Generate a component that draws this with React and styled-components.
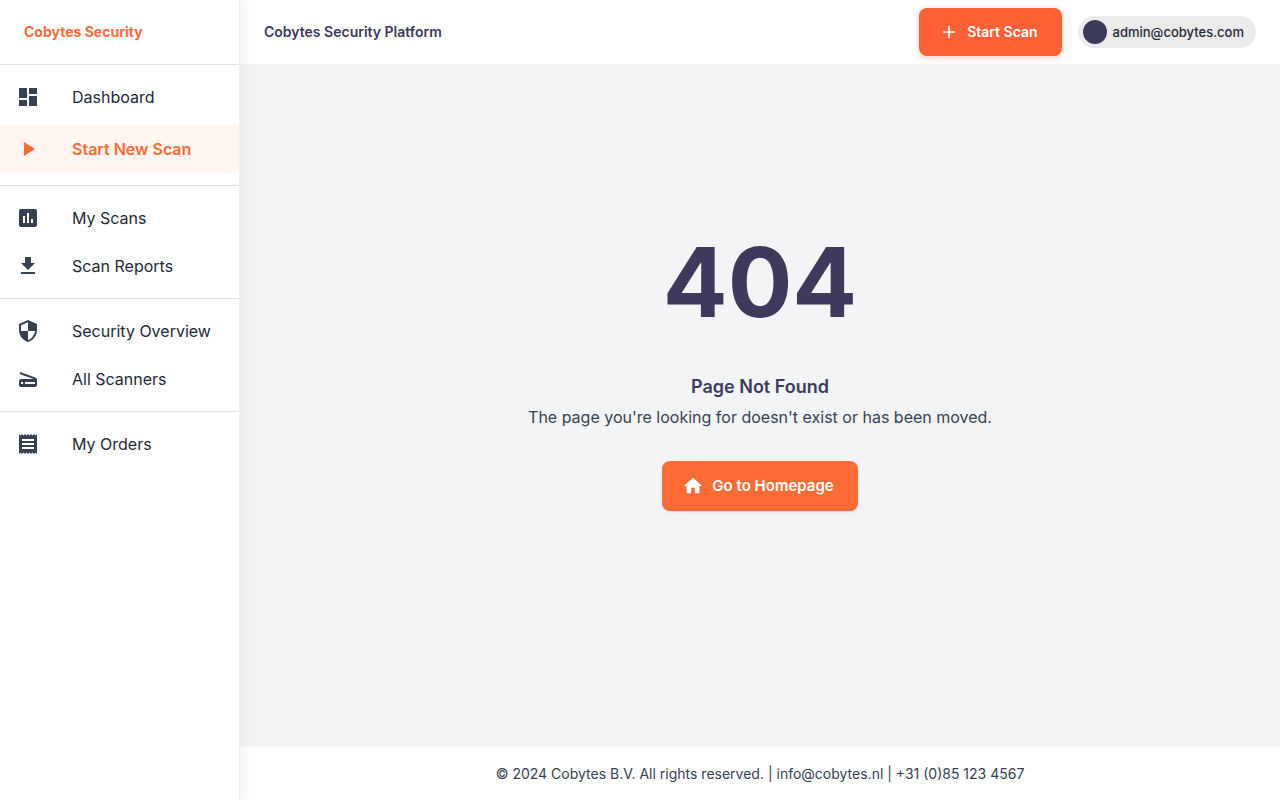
import React from "react";
import styled, { createGlobalStyle, css } from "styled-components";
import {
  MdAdd,
  MdAssessment,
  MdDashboard,
  MdFileDownload,
  MdHome,
  MdPlayArrow,
  MdReceipt,
  MdScanner,
  MdSecurity,
} from "react-icons/md";

const GlobalStyle = createGlobalStyle`
  *, *::before, *::after { box-sizing: border-box; }
  body {
    margin: 0;
    background: #f3f4f6;
    color: #1f2937;
    font-family: Inter, "Liberation Sans", sans-serif;
    font-size: 16px;
    line-height: 24px;
    -webkit-font-smoothing: antialiased;
  }
`;

const Shell = styled.div`
  display: flex;
  min-height: 100vh;
`;

const Sidebar = styled.aside`
  flex: 0 0 240px;
  z-index: 1;
  background: #fff;
  border-right: 1px solid #f0f0f0;
  box-shadow: 4px 0 12px rgba(0, 0, 0, 0.05);
`;

const Brand = styled.div`
  display: flex;
  align-items: center;
  height: 64px;
  padding: 0 24px;
  color: #ff6b35;
  font-size: 14px;
  font-weight: 700;
`;

const NavGroup = styled.ul`
  list-style: none;
  margin: 0;
  padding: 8px 0;
  border-top: 1px solid #e0e0e0;
`;

const NavLink = styled.a`
  display: flex;
  align-items: center;
  gap: 32px;
  height: 48px;
  padding: 0 16px;
  color: #1f2937;
  text-decoration: none;

  svg {
    flex: none;
    width: 24px;
    height: 24px;
    color: #374151;
  }

  ${({ $active }) =>
    $active &&
    css`
      margin: 4px 0;
      background: #fff5f1;
      color: #ff6b35;
      font-weight: 600;

      svg {
        color: #ff6b35;
      }
    `}
`;

const Page = styled.div`
  display: flex;
  flex: 1;
  flex-direction: column;
  min-width: 0;
`;

const TopBar = styled.header`
  display: flex;
  align-items: center;
  gap: 16px;
  height: 64px;
  padding: 0 24px;
  background: #fff;
`;

const TopTitle = styled.div`
  flex: 1;
  color: #3d3a5c;
  font-size: 14px;
  font-weight: 600;
`;

const ActionButton = styled.button`
  display: inline-flex;
  align-items: center;
  gap: 8px;
  height: ${({ $large }) => ($large ? 50 : 48)}px;
  padding: 0 24px 0 20px;
  border: 0;
  border-radius: 8px;
  background: ${({ $large }) => ($large ? "#ff6b35" : "#ff6035")};
  box-shadow: ${({ $large }) =>
    $large ? "0 1px 3px rgba(0, 0, 0, 0.1)" : "0 2px 6px rgba(255, 96, 53, 0.3)"};
  color: #fff;
  font-family: inherit;
  font-size: ${({ $large }) => ($large ? 15 : 14)}px;
  font-weight: 600;
  line-height: 24px;
  cursor: pointer;

  svg {
    width: ${({ $large }) => ($large ? 22 : 20)}px;
    height: ${({ $large }) => ($large ? 22 : 20)}px;
  }
`;

const UserChip = styled.div`
  display: flex;
  align-items: center;
  gap: 6px;
  height: 32px;
  padding: 0 12px 0 5px;
  border-radius: 16px;
  background: #ebebeb;
  font-size: 13px;
  font-weight: 500;
`;

const Avatar = styled.span`
  display: grid;
  place-items: center;
  width: 24px;
  height: 24px;
  border-radius: 50%;
  background: #3d3a5c;
  color: #374151;
  font-size: 12px;
`;

const Content = styled.main`
  display: flex;
  flex: 1;
  flex-direction: column;
  align-items: center;
  padding: 160px 24px 32px;
  text-align: center;
`;

const Code = styled.h1`
  margin: 0 0 32px;
  color: #3d3a5c;
  font-size: 96px;
  font-weight: 700;
  line-height: 116px;
`;

const Heading = styled.h2`
  margin: 0 0 3px;
  color: #3d3a5c;
  font-size: 18px;
  font-weight: 600;
  line-height: 30px;
`;

const Message = styled.p`
  margin: 0 0 32px;
  color: #374151;
`;

const Footer = styled.footer`
  padding: 16px 24px;
  background: #fff;
  color: #374151;
  font-size: 14px;
  line-height: 21px;
  text-align: center;
`;

const groups = [
  [
    { label: "Dashboard", icon: MdDashboard },
    { label: "Start New Scan", icon: MdPlayArrow, active: true },
  ],
  [
    { label: "My Scans", icon: MdAssessment },
    { label: "Scan Reports", icon: MdFileDownload },
  ],
  [
    { label: "Security Overview", icon: MdSecurity },
    { label: "All Scanners", icon: MdScanner },
  ],
  [{ label: "My Orders", icon: MdReceipt }],
];

export default function App() {
  return (
    <>
      <GlobalStyle />
      <Shell>
        <Sidebar>
          <Brand>Cobytes Security</Brand>
          <nav>
            {groups.map((items) => (
              <NavGroup key={items[0].label}>
                {items.map(({ label, icon: Icon, active }) => (
                  <li key={label}>
                    <NavLink href="#" $active={active} aria-current={active ? "page" : undefined}>
                      <Icon />
                      {label}
                    </NavLink>
                  </li>
                ))}
              </NavGroup>
            ))}
          </nav>
        </Sidebar>
        <Page>
          <TopBar>
            <TopTitle>Cobytes Security Platform</TopTitle>
            <ActionButton type="button">
              <MdAdd />
              Start Scan
            </ActionButton>
            <UserChip>
              <Avatar>A</Avatar>
              admin@cobytes.com
            </UserChip>
          </TopBar>
          <Content>
            <Code>404</Code>
            <Heading>Page Not Found</Heading>
            <Message>The page you're looking for doesn't exist or has been moved.</Message>
            <ActionButton type="button" $large>
              <MdHome />
              Go to Homepage
            </ActionButton>
          </Content>
          <Footer>© 2024 Cobytes B.V. All rights reserved. | info@cobytes.nl | +31 (0)85 123 4567</Footer>
        </Page>
      </Shell>
    </>
  );
}
